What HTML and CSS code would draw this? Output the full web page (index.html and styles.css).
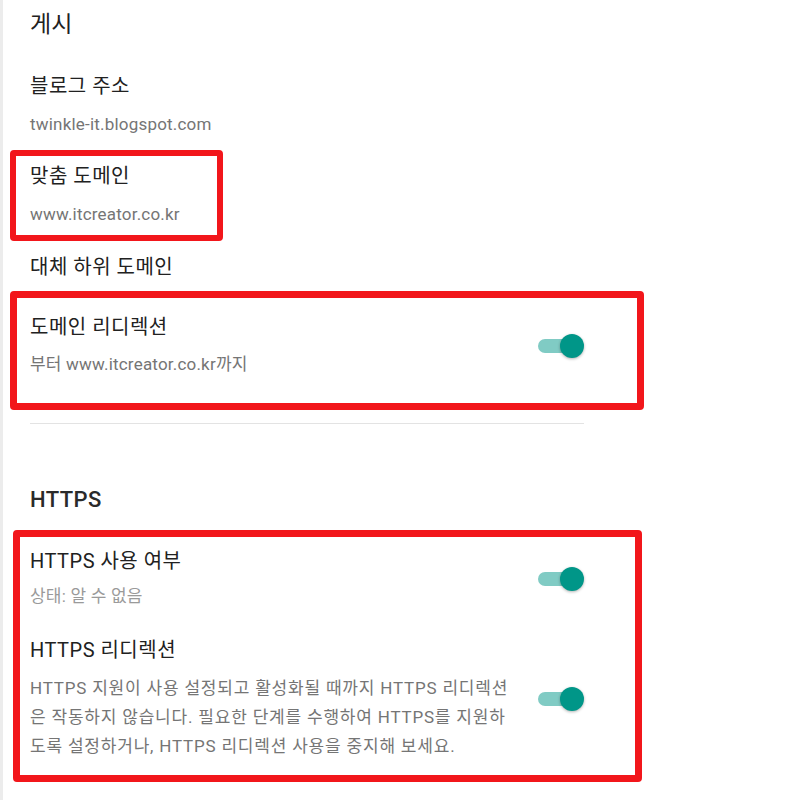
FILE: index.html
```html
<!DOCTYPE html>
<html lang="ko">

<head>
    <meta charset="UTF-8">
    <meta name="viewport" content="width=device-width, initial-scale=1.0">
    <title>설정 - 게시</title>
    <link rel="stylesheet" href="styles.css">
</head>

<body>
    <div class="page">
        <h2 class="section-title">게시</h2>

        <div class="item first">
            <div class="item-title">블로그 주소</div>
            <div class="item-sub">twinkle-it.blogspot.com</div>
        </div>

        <div class="mark mark-small">
            <div class="item">
                <div class="item-title">맞춤 도메인</div>
                <div class="item-sub">www.itcreator.co.kr</div>
            </div>
        </div>

        <div class="item plain">
            <div class="item-title">대체 하위 도메인</div>
        </div>

        <div class="mark mark-redirect">
            <div class="item row">
                <div class="item-text">
                    <div class="item-title">도메인 리디렉션</div>
                    <div class="item-sub">부터 www.itcreator.co.kr까지</div>
                </div>
                <div class="toggle on"><span class="knob"></span></div>
            </div>
        </div>

        <hr class="divider">

        <h2 class="section-title https">HTTPS</h2>

        <div class="mark mark-https">
            <div class="item row">
                <div class="item-text">
                    <div class="item-title">HTTPS 사용 여부</div>
                    <div class="item-sub light">상태: 알 수 없음</div>
                </div>
                <div class="toggle on"><span class="knob"></span></div>
            </div>

            <div class="item row second">
                <div class="item-text">
                    <div class="item-title">HTTPS 리디렉션</div>
                    <p class="item-desc">HTTPS 지원이 사용 설정되고 활성화될 때까지 HTTPS 리디렉션은 작동하지 않습니다. 필요한 단계를 수행하여 HTTPS를 지원하도록 설정하거나, HTTPS 리디렉션 사용을 중지해 보세요.</p>
                </div>
                <div class="toggle on"><span class="knob"></span></div>
            </div>
        </div>
    </div>
</body>

</html>
```

FILE: styles.css
```css
body {
    margin: 0;
    background-color: #fff;
    font-family: Roboto, "Noto Sans CJK KR", sans-serif;
    color: #212121;
}

.page {
    min-height: 800px;
    border-left: 3px solid #ececec;
    padding-left: 27px;
    width: 554px;
    box-sizing: content-box;
}

.section-title {
    margin: 0;
    padding-top: 10px;
    font-size: 23px;
    font-weight: 400;
    line-height: 30px;
}

.section-title.https {
    padding-top: 61px;
    font-size: 22px;
    font-weight: 500;
    letter-spacing: 0.4px;
    color: #2a2a2a;
}

.item-title {
    font-size: 20px;
    line-height: 28px;
    letter-spacing: 0.5px;
}

.item-sub {
    margin-top: 10px;
    font-size: 17px;
    line-height: 28px;
    letter-spacing: 0.2px;
    color: #757575;
}

.item-sub.light {
    color: #9a9a9a;
    margin-top: 7px;
}

.item.first {
    margin-top: 32px;
}

.item.plain {
    margin-top: 12px;
}

.row {
    display: flex;
    align-items: center;
}

.item-text {
    flex: 1;
}

.item-desc {
    margin: 10px 0 0;
    width: 488px;
    font-size: 17px;
    line-height: 29px;
    letter-spacing: 0.8px;
    color: #757575;
}

/* red annotation boxes */
.mark {
    border: 7px solid #f2161b;
    border-radius: 4px;
    margin-left: -20px;
    padding-left: 13px;
}

.mark-small {
    box-sizing: border-box;
    width: 213px;
    margin-top: 12px;
    border-width: 6px;
    padding: 6px 0 7px 14px;
}

.mark-redirect {
    margin-top: 10px;
    padding: 15px 53px 25px 13px;
    margin-right: -60px;
}

.mark-redirect .item-sub {
    margin-top: 9px;
}

.mark-https {
    margin-top: 15px;
    margin-left: -17px;
    padding: 10px 51px 14px 10px;
    margin-right: -58px;
}

.item.second {
    margin-top: 26px;
}

.divider {
    margin: 13px 0 0;
    border: none;
    border-top: 1px solid #e3e3e3;
}

/* switch */
.toggle {
    position: relative;
    width: 46px;
    height: 26px;
    flex-shrink: 0;
    margin-left: 20px;
}

.toggle::before {
    content: "";
    position: absolute;
    left: 0;
    top: 6px;
    width: 38px;
    height: 14px;
    border-radius: 7px;
    background-color: #80cbc4;
}

.knob {
    position: absolute;
    right: 0;
    top: 1px;
    width: 24px;
    height: 24px;
    border-radius: 50%;
    background-color: #009688;
    box-shadow: 0 1px 3px rgba(0, 0, 0, 0.3);
}
```
